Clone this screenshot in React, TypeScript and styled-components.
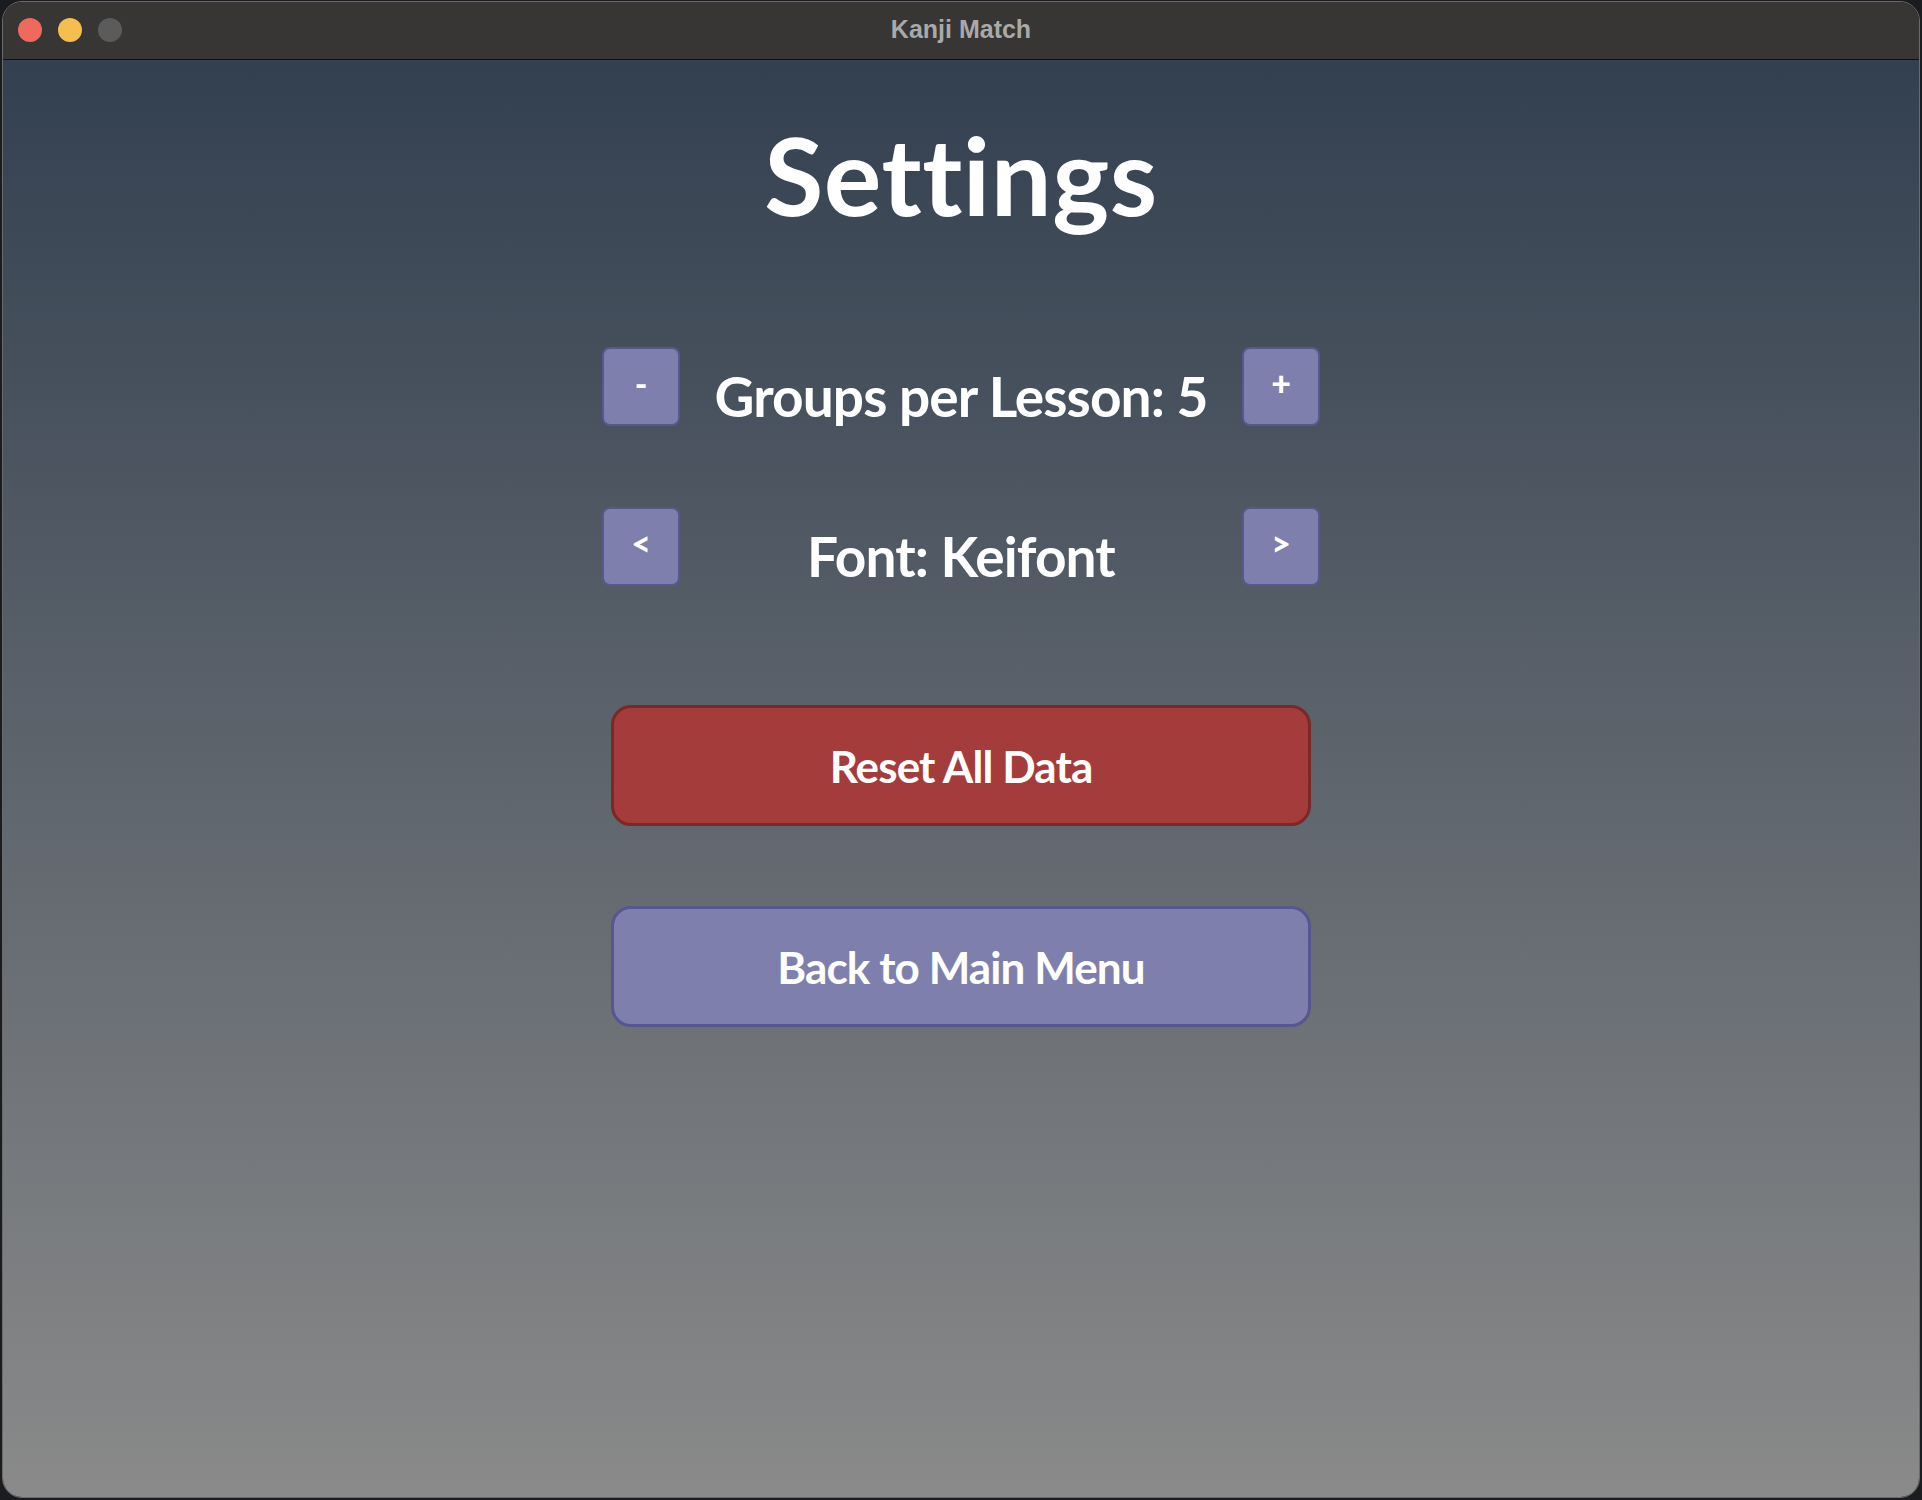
import React from "react";
import styled, { createGlobalStyle } from "styled-components";

const Global = createGlobalStyle`
  html, body {
    margin: 0;
    padding: 0;
    background: #1b1c20;
  }
  body {
    font-family: Lato, "Noto Sans", sans-serif;
    font-variant-ligatures: none;
  }
  #root {
    padding: 1px 2px 2px 2px;
  }
`;

const Window = styled.div`
  width: 1916px;
  height: 1495px;
  border: 1px solid #6b6b6b;
  border-radius: 20px;
  overflow: hidden;
  display: flex;
  flex-direction: column;
  box-sizing: content-box;
`;

const TitleBar = styled.div`
  height: 56px;
  background: #373634;
  border-bottom: 1px solid #111111;
  display: flex;
  align-items: center;
  position: relative;
  padding-left: 15px;
  padding-bottom: 1px;
  gap: 16px;
`;

const Light = styled.span<{ $color: string }>`
  width: 24px;
  height: 24px;
  border-radius: 50%;
  background: ${(p) => p.$color};
`;

const WindowTitle = styled.div`
  position: absolute;
  left: 0;
  right: 0;
  top: 0;
  bottom: 2px;
  display: flex;
  align-items: center;
  justify-content: center;
  font-family: "Liberation Sans", Arial, sans-serif;
  font-weight: 700;
  font-size: 25px;
  color: #a9a9a9;
  pointer-events: none;
`;

const Content = styled.main`
  flex: 1;
  background: linear-gradient(180deg, #334050 0%, #8a8a8a 100%);
  display: flex;
  flex-direction: column;
  align-items: center;
  padding-top: 60px;
  color: #ffffff;
  font-family: Lato, "Noto Sans", sans-serif;
  font-weight: 700;
  font-variant-ligatures: none;
`;

const Heading = styled.h1`
  margin: 0;
  font-size: 108px;
  line-height: 1;
  font-weight: 700;
  letter-spacing: 0.5px;
  font-variant-ligatures: none;
`;

const SettingRow = styled.div<{ $top: number }>`
  margin-top: ${(p) => p.$top}px;
  display: grid;
  grid-template-columns: 78px 562px 78px;
  align-items: start;
`;

const StepButton = styled.button`
  width: 78px;
  height: 79px;
  box-sizing: border-box;
  background: #7f7fad;
  border: 2px solid #585890;
  border-radius: 8px;
  color: #ffffff;
  font-family: Lato, "Noto Sans", sans-serif;
  font-weight: 900;
  font-size: 34px;
  line-height: 1;
  display: flex;
  align-items: center;
  justify-content: center;
  padding: 0 0 8px 0;
  cursor: pointer;
`;

const SettingLabel = styled.div`
  margin-top: 22px;
  text-align: center;
  font-size: 55px;
  line-height: 1;
  letter-spacing: -0.9px;
  white-space: nowrap;
`;

const BigButton = styled.button<{ $variant: "danger" | "primary"; $top: number }>`
  margin-top: ${(p) => p.$top}px;
  width: 700px;
  height: 121px;
  box-sizing: border-box;
  border-radius: 20px;
  border: 3px solid ${(p) => (p.$variant === "danger" ? "#7b2828" : "#565690")};
  background: ${(p) => (p.$variant === "danger" ? "#a33c3a" : "#7f7fad")};
  color: #ffffff;
  font-family: Lato, "Noto Sans", sans-serif;
  font-weight: 700;
  font-size: 44px;
  letter-spacing: -0.9px;
  display: flex;
  align-items: center;
  justify-content: center;
  cursor: pointer;
`;

export default function App() {
  return (
    <>
      <Global />
      <Window>
        <TitleBar>
          <Light $color="#ee6a5f" />
          <Light $color="#f5be4f" />
          <Light $color="#5b5b5b" />
          <WindowTitle>Kanji Match</WindowTitle>
        </TitleBar>
        <Content>
          <Heading>Settings</Heading>
          <SettingRow $top={119}>
            <StepButton>-</StepButton>
            <SettingLabel>Groups per Lesson: 5</SettingLabel>
            <StepButton>+</StepButton>
          </SettingRow>
          <SettingRow $top={81}>
            <StepButton>&lt;</StepButton>
            <SettingLabel>Font: Keifont</SettingLabel>
            <StepButton>&gt;</StepButton>
          </SettingRow>
          <BigButton $variant="danger" $top={119}>Reset All Data</BigButton>
          <BigButton $variant="primary" $top={80}>Back to Main Menu</BigButton>
        </Content>
      </Window>
    </>
  );
}
